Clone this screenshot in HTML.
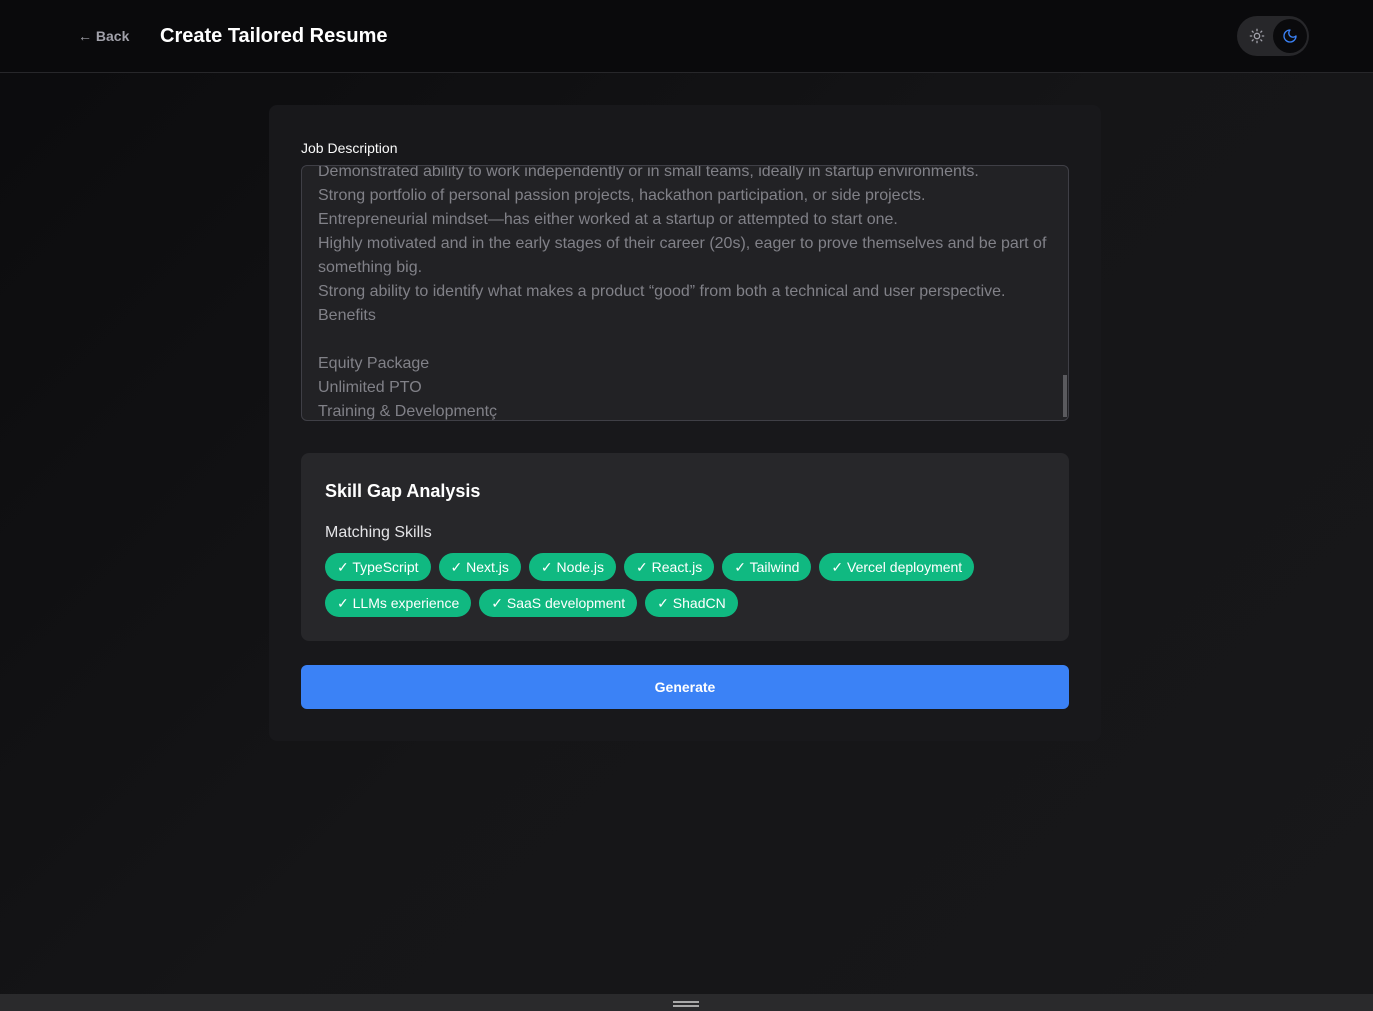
<!DOCTYPE html>
<html><head><meta charset="utf-8"><style>
*{box-sizing:border-box;margin:0;padding:0}
body{width:1373px;height:1011px;overflow:hidden;font-family:"Liberation Sans",sans-serif;background:linear-gradient(135deg,#0b0b0d 0%,#151517 50%,#18181a 100%);position:relative;color:#fff}
.hdr{height:73px;border-bottom:1px solid #27272a;background:#0a0a0c;position:relative}
.back{position:absolute;left:78px;top:28px;font-size:14px;font-weight:bold;color:#a1a1aa}
.title{position:absolute;left:160px;top:25px;font-size:20px;font-weight:bold;color:#fff}
.tog{position:absolute;left:1237px;top:16px;width:72px;height:40px;border-radius:20px;background:#27272a}
.tog .m{position:absolute;left:36px;top:3px;width:34px;height:34px;border-radius:17px;background:#0a0a0c}
.card{position:absolute;left:269px;top:105px;width:832px;height:636px;background:#18181b;border-radius:8px}
.lbl{position:absolute;left:32px;top:35px;font-size:14px;color:#fafafa}
.ta{position:absolute;left:32px;top:60px;width:768px;height:256px;border:1px solid #3f3f46;border-radius:6px;background:#222225;overflow:hidden}
.ta .t{position:absolute;left:16px;top:-6px;width:740px;font-size:16px;line-height:24px;color:#818188}
.sb{position:absolute;right:1px;top:209px;width:4px;height:42px;background:#5a5a5e}
.sg{position:absolute;left:32px;top:348px;width:768px;height:188px;background:#27272a;border-radius:8px}
.sg h3{position:absolute;left:24px;top:28px;font-size:18px;font-weight:bold}
.sg .ms{position:absolute;left:24px;top:71px;font-size:16px;color:#e4e4e7}
.chips{position:absolute;left:24px;top:100px;width:700px;display:flex;flex-wrap:wrap;gap:8px}
.chip{height:28px;line-height:28px;padding:0 12px;border-radius:14px;background:#10b981;font-size:14px;color:#fff}
.btn{position:absolute;left:32px;top:560px;width:768px;height:44px;border-radius:6px;background:#3b82f6;text-align:center;line-height:44px;font-size:14px;font-weight:bold}
.bot{position:absolute;left:0;top:994px;width:1373px;height:17px;background:#2a2a2c}
.bot i{position:absolute;left:673px;width:26px;height:2px;background:#a8a8a8}
</style></head><body>
<div class="hdr">
<div class="back">← Back</div>
<div class="title">Create Tailored Resume</div>
<div class="tog">
<svg style="position:absolute;left:12px;top:12px" width="16" height="16" viewBox="0 0 24 24" fill="none" stroke="#a1a1aa" stroke-width="2" stroke-linecap="round"><circle cx="12" cy="12" r="4"/><path d="M12 2v2M12 20v2M4.9 4.9l1.4 1.4M17.7 17.7l1.4 1.4M2 12h2M20 12h2M6.3 17.7l-1.4 1.4M19.1 4.9l-1.4 1.4"/></svg>
<div class="m"><svg style="position:absolute;left:9px;top:9px" width="16" height="16" viewBox="0 0 24 24" fill="none" stroke="#3b82f6" stroke-width="2" stroke-linecap="round" stroke-linejoin="round"><path d="M12 3a6 6 0 0 0 9 9 9 9 0 1 1-9-9Z"/></svg></div>
</div>
</div>
<div class="card">
<div class="lbl">Job Description</div>
<div class="ta"><div class="t">Demonstrated ability to work independently or in small teams, ideally in startup environments.<br>Strong portfolio of personal passion projects, hackathon participation, or side projects.<br>Entrepreneurial mindset—has either worked at a startup or attempted to start one.<br>Highly motivated and in the early stages of their career (20s), eager to prove themselves and be part of something big.<br>Strong ability to identify what makes a product “good” from both a technical and user perspective.<br>Benefits<br><br>Equity Package<br>Unlimited PTO<br>Training &amp; Developmentç</div><div class="sb"></div></div>
<div class="sg">
<h3>Skill Gap Analysis</h3>
<div class="ms">Matching Skills</div>
<div class="chips">
<span class="chip">✓ TypeScript</span><span class="chip">✓ Next.js</span><span class="chip">✓ Node.js</span><span class="chip">✓ React.js</span><span class="chip">✓ Tailwind</span><span class="chip">✓ Vercel deployment</span><span class="chip">✓ LLMs experience</span><span class="chip">✓ SaaS development</span><span class="chip">✓ ShadCN</span>
</div>
</div>
<div class="btn">Generate</div>
</div>
<div class="bot"><i style="top:7px"></i><i style="top:11px"></i></div>
</body></html>
